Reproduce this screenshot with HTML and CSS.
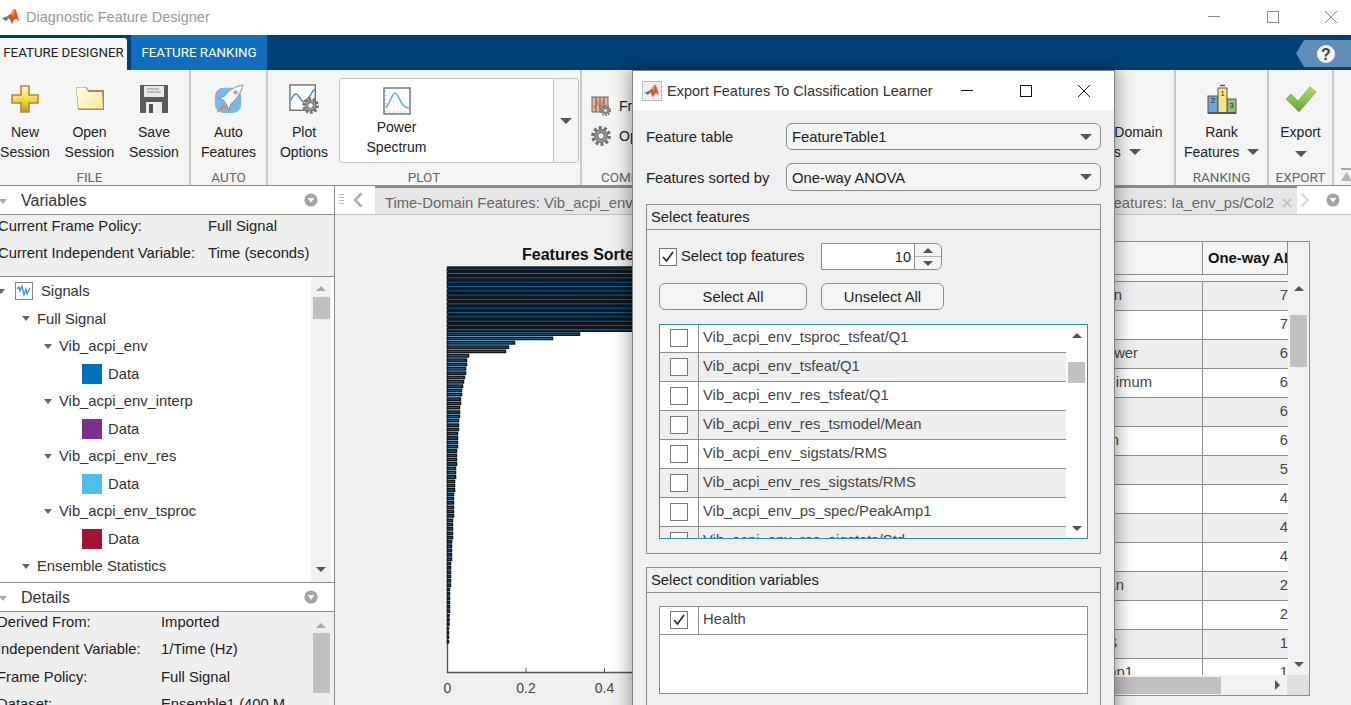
FILE: index.html
```html
<!DOCTYPE html>
<html lang="en">
<head>
<meta charset="utf-8">
<title>Diagnostic Feature Designer</title>
<link rel="stylesheet" href="styles.css">
</head>
<body>
<svg class="defs" width="0" height="0" aria-hidden="true">
  <defs>
    <linearGradient id="gold" x1="0" y1="0" x2="0" y2="1"><stop offset="0" stop-color="#fff7b8"/><stop offset=".55" stop-color="#f8d640"/><stop offset="1" stop-color="#c9981c"/></linearGradient>
    <linearGradient id="paper" x1="0" y1="0" x2="1" y2="1"><stop offset="0" stop-color="#fffdf0"/><stop offset="1" stop-color="#fbe89a"/></linearGradient>
    <linearGradient id="green" x1="0" y1="0" x2="0" y2="1"><stop offset="0" stop-color="#b4df6a"/><stop offset="1" stop-color="#5da52a"/></linearGradient>
    <symbol id="gear" viewBox="0 0 20 20">
      <circle cx="10" cy="10" r="8.2" fill="none" stroke="#6f6f6f" stroke-width="3.4" stroke-dasharray="3 2.15"/>
      <circle cx="10" cy="10" r="6.4" fill="#9a9a9a" stroke="#666"/>
      <circle cx="10" cy="10" r="3.4" fill="#f2f2f2" stroke="#555"/>
    </symbol>
    <symbol id="logo" viewBox="0 0 20 20">
      <path d="M0 11.5l5.5-2.3 2 2.2-3 3.2z" fill="#3a7fb8"/>
      <path d="M5.5 9.2L10 6c1-2 3-5 4-5 2 0 3.500 8 5.500 14-2-1.500-3.500-3-4.500-3-1.500 0-3 5-4 6-1-3-2.500-5.500-3.500-6.600z" fill="#d9582a"/>
      <path d="M14 1c-1 0-3 3-4 5l2.500 3.500z" fill="#e9a13b"/>
    </symbol>
    <symbol id="menu-dot" viewBox="0 0 14 14">
      <circle cx="7" cy="7" r="6.600" fill="#a4a4a4"/>
      <path d="M3.600 5h6.800L7 9.800z" fill="#fff"/>
    </symbol>
  </defs>
</svg>

<header class="titlebar">
  <svg class="app-logo"><use href="#logo"/></svg>
  <span class="app-title">Diagnostic Feature Designer</span>
  <div class="win-controls">
    <svg class="win-icon" viewBox="0 0 12 12"><path d="M0 5.500h12" stroke="#8a8a8a" fill="none"/></svg>
    <svg class="win-icon" viewBox="0 0 12 12"><rect x=".5" y=".5" width="11" height="11" fill="none" stroke="#8a8a8a"/></svg>
    <svg class="win-icon" viewBox="0 0 12 12"><path d="M0 0l12 12M12 0L0 12" stroke="#8a8a8a" fill="none"/></svg>
  </div>
</header>

<nav class="tabstrip">
  <div class="tab tab-active">FEATURE DESIGNER</div>
  <div class="tab tab-other">FEATURE RANKING</div>
  <svg class="help" viewBox="0 0 55 27">
    <path d="M8 0h47v27H8L0 13.500z" fill="#5f8db6"/>
    <circle cx="30" cy="14" r="9" fill="#f4f4f4"/>
    <text x="30" y="19.500" text-anchor="middle" class="help-q">?</text>
  </svg>
</nav>

<section class="toolstrip">
  <div class="sec sec-file">
    <div class="sec-body file-body">
      <div class="tool">
        <svg class="ico" viewBox="0 0 30 30"><path d="M11 2h8v9h9v8h-9v9h-8v-9H2v-8h9z" fill="url(#gold)" stroke="#a98a45" stroke-width="1.600"/></svg>
        <span>New<br>Session</span>
      </div>
      <div class="tool">
        <svg class="ico" viewBox="0 0 30 30"><path d="M1 3h10l3 3h15v20H3z" fill="#a98a55"/><path d="M1.500 3.500h9l3 4.500h13.500l1 16.500H3.500z" fill="url(#paper)"/></svg>
        <span>Open<br>Session</span>
      </div>
      <div class="tool">
        <svg class="ico" viewBox="0 0 30 30"><path d="M1 1h28v28H1z" fill="#5a5a5a"/><rect x="5" y="2" width="20" height="11" fill="#e8e8e8"/><path d="M8 5h12M8 8h14" stroke="#8a8a8a"/><rect x="7" y="18" width="16" height="11" fill="#efefef"/><rect x="10" y="20" width="4" height="9" fill="#555"/></svg>
        <span>Save<br>Session</span>
      </div>
    </div>
    <div class="sec-label label-file">FILE</div>
  </div>
  <div class="sec sec-auto">
    <div class="sec-body">
      <div class="tool tool-wide">
        <svg class="ico" viewBox="0 0 32 32">
          <rect x="1" y="4" width="28" height="27" rx="9" fill="#73b9f2"/>
          <path d="M31 1C24 2 16 6 11 13L5 15l5 2 4 6 2 5 2-7c7-5 11-13 13-20z" fill="#f6f6f6" stroke="#8d8d8d"/>
          <circle cx="23" cy="9" r="2.300" fill="#a8a8a8"/>
          <path d="M10 21l-8 10 11-6z" fill="#f08a1d"/>
        </svg>
        <span>Auto<br>Features</span>
      </div>
    </div>
    <div class="sec-label">AUTO</div>
  </div>
  <div class="sec sec-plot">
    <div class="sec-body plot-body">
      <div class="tool tool-options">
        <svg class="ico" viewBox="0 0 32 32">
          <rect x="1" y="1" width="27" height="27" fill="#fff" stroke="#666" stroke-width="1.400"/>
          <path d="M2 17c4-8 6-8 9-3s5 7 9 2 6-11 8-10" fill="none" stroke="#3f86c6" stroke-width="1.500"/>
          <use href="#gear" x="14" y="14" width="18" height="18"/>
        </svg>
        <span>Plot<br>Options</span>
      </div>
      <div class="gallery">
        <div class="gallery-item">
          <svg class="ico ico-spec" viewBox="0 0 28 28">
            <rect x="1" y="1" width="26" height="26" fill="#fff" stroke="#777" stroke-width="1.500"/>
            <path d="M3 4v21h22" fill="none" stroke="#999" stroke-dasharray="1 3"/>
            <path d="M3 20c4-3 6-14 9-14s5 9 8 12 4 3 6 3" fill="none" stroke="#57b0e3" stroke-width="1.500"/>
          </svg>
          <span>Power<br>Spectrum</span>
        </div>
        <div class="gallery-drop"><i class="caret"></i></div>
      </div>
    </div>
    <div class="sec-label">PLOT</div>
  </div>
  <div class="sec sec-compute">
    <div class="sec-body compute-body">
      <div class="small-tool">
        <svg class="ico-small" viewBox="0 0 20 20">
          <rect x="1" y="1" width="16" height="15" fill="#e8b49c" stroke="#666"/>
          <path d="M5 1v15M9 1v15M13 1v15" stroke="#777" stroke-width="1.500"/>
          <path d="M3 12l3-7 3 8 4-10" fill="none" stroke="#e0662d"/>
          <use href="#gear" x="9" y="9" width="11" height="11"/>
        </svg>
        <span>Frame Policy</span>
      </div>
      <div class="small-tool">
        <svg class="ico-small" viewBox="0 0 20 20"><use href="#gear" x="0" y="0" width="20" height="20"/></svg>
        <span>Options</span>
      </div>
    </div>
    <div class="sec-label label-compute">COMPUTE</div>
  </div>
  <div class="sec sec-features">
    <div class="sec-body features-body">
      <div class="tool tool-domain">
        <span>Frequency-Domain<br>Features <i class="caret caret-inline"></i></span>
      </div>
    </div>
    <div class="sec-label label-features">FEATURE DESIGN</div>
  </div>
  <div class="sec sec-rank">
    <div class="sec-body">
      <div class="tool tool-wide">
        <svg class="ico" viewBox="0 0 30 30">
          <rect x="1" y="12" width="10" height="17" fill="#6ea6d8" stroke="#555"/>
          <rect x="20" y="15" width="9" height="14" fill="#8fc07c" stroke="#555"/>
          <rect x="11" y="4" width="9" height="25" fill="#f9e680" stroke="#555"/>
          <path d="M1 29h28" stroke="#555" stroke-width="2"/>
          <path d="M13 1.500h5" stroke="#555" stroke-width="1.500"/>
          <text x="15.500" y="12" class="rank-num" text-anchor="middle">1</text>
          <text x="6" y="19" class="rank-num" text-anchor="middle">2</text>
          <text x="24.500" y="24" class="rank-num" text-anchor="middle">3</text>
        </svg>
        <span>Rank<br>Features <i class="caret caret-inline"></i></span>
      </div>
    </div>
    <div class="sec-label">RANKING</div>
  </div>
  <div class="sec sec-export">
    <div class="sec-body">
      <div class="tool tool-wide">
        <svg class="ico" viewBox="0 0 30 30"><path d="M0 15l5-5 7 7L24 3l6 5-17 20z" fill="url(#green)" stroke="#7fa85a" stroke-width=".8"/></svg>
        <span>Export<br><i class="caret"></i></span>
      </div>
    </div>
    <div class="sec-label">EXPORT</div>
  </div>
  <div class="sec sec-collapse">
    <svg class="collapse" viewBox="0 0 11 14"><path d="M0 1h11" stroke="#aaa" stroke-width="2"/><path d="M5.500 4L11 13H0z" fill="#b5b5b5"/></svg>
  </div>
</section>

<main class="workspace">
  <aside class="side">
    <div class="side-head">
      <i class="tree-arrow head-arrow"></i><span>Variables</span>
      <svg class="menu-dot"><use href="#menu-dot"/></svg>
    </div>
    <div class="info">
      <div class="info-row"><span class="info-key-a">Current Frame Policy:</span><span>Full Signal</span></div>
      <div class="info-row"><span class="info-key-a">Current Independent Variable:</span><span>Time (seconds)</span></div>
    </div>
    <div class="tree">
      <div class="tree-rows">
        <div class="node lvl0"><i class="tree-arrow"></i>
          <svg class="signal-ico" viewBox="0 0 18 18"><rect x=".5" y=".5" width="17" height="17" fill="#fff" stroke="#888"/><path d="M2 7l2-2 1 4 2-5 2 9 2-6 1 5 3-6" fill="none" stroke="#2a8fd6" stroke-width="1.200"/></svg>
          <span>Signals</span></div>
        <div class="node lvl1"><i class="tree-arrow"></i><span>Full Signal</span></div>
        <div class="node lvl2"><i class="tree-arrow"></i><span>Vib_acpi_env</span></div>
        <div class="node lvl3"><i class="swatch sw-blue"></i><span>Data</span></div>
        <div class="node lvl2"><i class="tree-arrow"></i><span>Vib_acpi_env_interp</span></div>
        <div class="node lvl3"><i class="swatch sw-purple"></i><span>Data</span></div>
        <div class="node lvl2"><i class="tree-arrow"></i><span>Vib_acpi_env_res</span></div>
        <div class="node lvl3"><i class="swatch sw-sky"></i><span>Data</span></div>
        <div class="node lvl2"><i class="tree-arrow"></i><span>Vib_acpi_env_tsproc</span></div>
        <div class="node lvl3"><i class="swatch sw-red"></i><span>Data</span></div>
        <div class="node lvl1"><i class="tree-arrow"></i><span>Ensemble Statistics</span></div>
      </div>
      <div class="vbar tree-bar">
        <i class="arrow-up arrow-light"></i>
        <b class="thumb thumb-tree"></b>
        <i class="arrow-down"></i>
      </div>
    </div>
    <div class="side-head">
      <i class="tree-arrow head-arrow"></i><span>Details</span>
      <svg class="menu-dot"><use href="#menu-dot"/></svg>
    </div>
    <div class="details">
      <div class="details-rows">
        <div class="info-row"><span class="info-key-b">Derived From:</span><span>Imported</span></div>
        <div class="info-row"><span class="info-key-b">Independent Variable:</span><span>1/Time (Hz)</span></div>
        <div class="info-row"><span class="info-key-b">Frame Policy:</span><span>Full Signal</span></div>
        <div class="info-row"><span class="info-key-b">Dataset:</span><span>Ensemble1 (400 M</span></div>
      </div>
      <div class="vbar details-bar">
        <i class="arrow-up arrow-light"></i>
        <b class="thumb thumb-details"></b>
      </div>
    </div>
  </aside>

  <div class="doc">
    <div class="doc-tabs">
      <div class="doc-nav doc-nav-left">
        <i class="grip"></i>
        <svg class="chev" viewBox="0 0 10 16"><path d="M8.500 1.500L2 8l6.500 6.500" fill="none" stroke="#aaa" stroke-width="2.500"/></svg>
      </div>
      <div class="doc-tab-row">
        <span>Time-Domain Features: Vib_acpi_env</span>
        <span class="doc-tab-end">Features: Ia_env_ps/Col2 <svg class="tab-x" viewBox="0 0 10 10"><path d="M1 1l8 8M9 1L1 9" stroke="#c4c4c4" stroke-width="2"/></svg></span>
      </div>
      <div class="doc-nav doc-nav-right">
        <svg class="chev" viewBox="0 0 10 16"><path d="M1.500 1.500L8 8l-6.500 6.500" fill="none" stroke="#ddd" stroke-width="2.500"/></svg>
        <svg class="menu-dot doc-dot"><use href="#menu-dot"/></svg>
      </div>
    </div>
    <div class="doc-body">
      <figure class="plot">
        <figcaption class="plot-title">Features Sorted by One-way ANOVA</figcaption>
        <svg class="axes" viewBox="0 0 363 440">
          <rect x="10" y=".5" width="353" height="406" fill="#fff"/>
          <rect class="bars-back" x="10.500" y="1" width="353" height="65"/>
          <path d="M10.500 .5V406.500H363M10.500 .5H363" fill="none" stroke="#555" stroke-width="1.400"/>
          <path d="M89 .5v4M167.500 .5v4M89 406v-4M167.500 406v-4M246 406v-4" stroke="#555"/>
          <path class="bars" transform="translate(10.500 2)" d="M0 0h360v2.300h-360z m0 4.330h360v2.300h-360z m0 4.330h360v2.300h-360z m0 4.330h360v2.300h-360z m0 4.330h360v2.300h-360z m0 4.330h360v2.300h-360z m0 4.330h360v2.300h-360z m0 4.330h360v2.300h-360z m0 4.330h360v2.300h-360z m0 4.330h360v2.300h-360z m0 4.330h360v2.300h-360z m0 4.330h360v2.300h-360z m0 4.330h360v2.300h-360z m0 4.330h360v2.300h-360z m0 4.330h360v2.300h-360z m0 4.330h132v2.300h-132z m0 4.330h105v2.300h-105z m0 4.330h67v2.300h-67z m0 4.330h61v2.300h-61z m0 4.330h58v2.300h-58z m0 4.330h21v2.300h-21z m0 4.330h19v2.300h-19z m0 4.330h19v2.300h-19z m0 4.330h18v2.300h-18z m0 4.330h18v2.300h-18z m0 4.330h17v2.300h-17z m0 4.330h16v2.300h-16z m0 4.330h15v2.300h-15z m0 4.330h14v2.300h-14z m0 4.330h14v2.300h-14z m0 4.330h13v2.300h-13z m0 4.330h13v2.300h-13z m0 4.330h12v2.300h-12z m0 4.330h12v2.300h-12z m0 4.330h12v2.300h-12z m0 4.330h11v2.300h-11z m0 4.330h11v2.300h-11z m0 4.330h11v2.300h-11z m0 4.330h10v2.300h-10z m0 4.330h10v2.300h-10z m0 4.330h10v2.300h-10z m0 4.330h10v2.300h-10z m0 4.330h9v2.300h-9z m0 4.330h9v2.300h-9z m0 4.330h9v2.300h-9z m0 4.330h9v2.300h-9z m0 4.330h8v2.300h-8z m0 4.330h8v2.300h-8z m0 4.330h8v2.300h-8z m0 4.330h7v2.300h-7z m0 4.330h7v2.300h-7z m0 4.330h7v2.300h-7z m0 4.330h6v2.300h-6z m0 4.330h6v2.300h-6z m0 4.330h6v2.300h-6z m0 4.330h6v2.300h-6z m0 4.330h6v2.300h-6z m0 4.330h6v2.300h-6z m0 4.330h5v2.300h-5z m0 4.330h5v2.300h-5z m0 4.330h5v2.300h-5z m0 4.330h5v2.300h-5z m0 4.330h5v2.300h-5z m0 4.330h4v2.300h-4z m0 4.330h4v2.300h-4z m0 4.330h4v2.300h-4z m0 4.330h4v2.300h-4z m0 4.330h4v2.300h-4z m0 4.330h3v2.300h-3z m0 4.330h3v2.300h-3z m0 4.330h3v2.300h-3z m0 4.330h3v2.300h-3z m0 4.330h3v2.300h-3z m0 4.330h3v2.300h-3z m0 4.330h2v2.300h-2z m0 4.330h2v2.300h-2z m0 4.330h2v2.300h-2z m0 4.330h2v2.300h-2z m0 4.330h2v2.300h-2z m0 4.330h2v2.300h-2z m0 4.330h1.500v2.300h-1.500z m0 4.330h1.500v2.300h-1.500z m0 4.330h1.500v2.300h-1.500z m0 4.330h1v2.300h-1z m0 4.330h1v2.300h-1z m0 4.330h1v2.300h-1z m0 4.330h1v2.300h-1z"/>
          <text x="10.500" y="427" class="tick" text-anchor="middle">0</text>
          <text x="89" y="427" class="tick" text-anchor="middle">0.2</text>
          <text x="167.500" y="427" class="tick" text-anchor="middle">0.4</text>
        </svg>
      </figure>
      <div class="ranktable">
        <div class="rt-main">
          <div class="rt-cols">
            <div class="rt-head">
              <div class="rt-c1"></div>
              <div class="rt-c2 rt-head-cell">One-way ANOVA</div>
            </div>
            <div class="rt-rule"></div>
            <div class="rt-rows">
              <div class="rt-row"><div class="rt-c1 end-a">n</div><div class="rt-c2">7</div></div>
              <div class="rt-row"><div class="rt-c1"></div><div class="rt-c2">7</div></div>
              <div class="rt-row"><div class="rt-c1 end-b">wer</div><div class="rt-c2">6</div></div>
              <div class="rt-row"><div class="rt-c1 end-c">imum</div><div class="rt-c2">6</div></div>
              <div class="rt-row"><div class="rt-c1"></div><div class="rt-c2">6</div></div>
              <div class="rt-row"><div class="rt-c1 end-d">n</div><div class="rt-c2">6</div></div>
              <div class="rt-row"><div class="rt-c1"></div><div class="rt-c2">5</div></div>
              <div class="rt-row"><div class="rt-c1"></div><div class="rt-c2">4</div></div>
              <div class="rt-row"><div class="rt-c1"></div><div class="rt-c2">4</div></div>
              <div class="rt-row"><div class="rt-c1"></div><div class="rt-c2">4</div></div>
              <div class="rt-row"><div class="rt-c1 end-e">an</div><div class="rt-c2">2</div></div>
              <div class="rt-row"><div class="rt-c1"></div><div class="rt-c2">2</div></div>
              <div class="rt-row"><div class="rt-c1 end-f">S</div><div class="rt-c2">1</div></div>
              <div class="rt-row"><div class="rt-c1 end-g">mp1</div><div class="rt-c2">1</div></div>
            </div>
          </div>
          <div class="vbar rt-bar">
            <i class="arrow-up"></i>
            <b class="thumb thumb-rt"></b>
            <i class="arrow-down"></i>
          </div>
        </div>
        <div class="rt-hbar">
          <b class="hthumb"></b>
          <i class="arrow-right"></i>
          <b class="rt-corner"></b>
        </div>
      </div>
    </div>
  </div>
</main>

<div class="dialog" role="dialog" aria-label="Export Features To Classification Learner">
  <div class="dlg-title">
    <svg class="dlg-logo" viewBox="0 0 20 20"><rect x=".5" y=".5" width="19" height="19" fill="#eee" stroke="#bbb"/><use href="#logo" x="2" y="3" width="16" height="15"/></svg>
    <span>Export Features To Classification Learner</span>
    <div class="dlg-controls">
      <svg class="win-icon" viewBox="0 0 12 12"><path d="M0 5.500h12" stroke="#111" fill="none"/></svg>
      <svg class="win-icon" viewBox="0 0 12 12"><rect x=".5" y=".5" width="11" height="11" fill="none" stroke="#111"/></svg>
      <svg class="win-icon" viewBox="0 0 12 12"><path d="M0 0l12 12M12 0L0 12" stroke="#111" fill="none"/></svg>
    </div>
  </div>
  <div class="dlg-body">
    <div class="field"><label>Feature table</label><div class="select select-a"><span>FeatureTable1</span><i class="caret"></i></div></div>
    <div class="field field-b"><label>Features sorted by</label><div class="select select-b"><span>One-way ANOVA</span><i class="caret"></i></div></div>

    <section class="panel">
      <h2 class="panel-head">Select features</h2>
      <div class="panel-body">
        <div class="top-row">
          <div class="check-label">
            <span class="box box-on"><svg viewBox="0 0 16 16"><path d="M3 8l3.500 4L13 3" fill="none" stroke="#222" stroke-width="1.600"/></svg></span>
            <span class="check-text">Select top features</span>
          </div>
          <div class="spinner">
            <span class="spin-val">10</span>
            <span class="spin-btns"><i class="arrow-up"></i><i class="spin-line"></i><i class="arrow-down"></i></span>
          </div>
        </div>
        <div class="btn-row">
          <button class="btn btn-a" type="button">Select All</button>
          <button class="btn btn-b" type="button">Unselect All</button>
        </div>
        <div class="list list-features">
          <div class="list-rows">
            <div class="list-row"><div class="list-check"><span class="box"></span></div><div class="list-text">Vib_acpi_env_tsproc_tsfeat/Q1</div></div>
            <div class="list-row"><div class="list-check"><span class="box"></span></div><div class="list-text">Vib_acpi_env_tsfeat/Q1</div></div>
            <div class="list-row"><div class="list-check"><span class="box"></span></div><div class="list-text">Vib_acpi_env_res_tsfeat/Q1</div></div>
            <div class="list-row"><div class="list-check"><span class="box"></span></div><div class="list-text">Vib_acpi_env_res_tsmodel/Mean</div></div>
            <div class="list-row"><div class="list-check"><span class="box"></span></div><div class="list-text">Vib_acpi_env_sigstats/RMS</div></div>
            <div class="list-row"><div class="list-check"><span class="box"></span></div><div class="list-text">Vib_acpi_env_res_sigstats/RMS</div></div>
            <div class="list-row"><div class="list-check"><span class="box"></span></div><div class="list-text">Vib_acpi_env_ps_spec/PeakAmp1</div></div>
            <div class="list-row"><div class="list-check"><span class="box"></span></div><div class="list-text">Vib_acpi_env_res_sigstats/Std</div></div>
          </div>
          <div class="vbar list-bar">
            <i class="arrow-up"></i>
            <b class="thumb thumb-list"></b>
            <i class="arrow-down"></i>
          </div>
        </div>
      </div>
    </section>

    <section class="panel panel-cond">
      <h2 class="panel-head">Select condition variables</h2>
      <div class="panel-body">
        <div class="list list-cond">
          <div class="list-rows">
            <div class="list-row list-row-plain"><div class="list-check"><span class="box"><svg viewBox="0 0 16 16"><path d="M3 8l3.500 4L13 3" fill="none" stroke="#222" stroke-width="1.600"/></svg></span></div><div class="list-text">Health</div></div>
          </div>
        </div>
      </div>
    </section>
  </div>
</div>
</body>
</html>
```

FILE: styles.css
```css
* { box-sizing: border-box; }
html, body { margin: 0; padding: 0; }
body {
  position: relative;
  width: 1351px;
  height: 705px;
  overflow: hidden;
  display: flex;
  flex-direction: column;
  font: 14.8px/20px "Liberation Sans", Arial, sans-serif;
  color: #222;
  background: #f0f0f0;
}
i, b { display: block; font-style: normal; }
.defs { position: absolute; }

/* window title */
.titlebar { height: 35px; flex: none; background: #fff; display: flex; align-items: center; padding: 0 0 2px 2px; }
.app-logo { width: 18px; height: 18px; margin-right: 6px; }
.app-title { color: #999; font-size: 14.5px; }
.win-controls { margin-left: auto; display: flex; gap: 46.5px; padding-right: 14px; }
.win-icon { width: 12px; height: 12px; display: block; }

/* tabs */
.tabstrip { height: 35px; flex: none; background: #004075; display: flex; align-items: flex-end; position: relative; }
.tab { height: 35px; font: 13.3px/36px Roboto, "Liberation Sans", sans-serif; text-align: center; }
.tab-active { width: 127px; height: 32px; line-height: 30px; background: #f5f5f5; border-top-right-radius: 3px; white-space: nowrap; color: #222; }
.tab-other { width: 136px; margin-left: 4px; background: #0f6fbe; color: #fff; }
.help { width: 55px; height: 27px; margin-left: auto; align-self: center; margin-right: 0; margin-top: 1px; }
.help-q { font: bold 16px "Liberation Sans", sans-serif; fill: #444; }

/* toolstrip */
.toolstrip { height: 115px; flex: none; background: #f5f5f5; display: flex; font-size: 14px; }
.sec { display: flex; flex-direction: column; flex: none; position: relative; border-right: 2px solid #c9c9c9; }
.sec-body { flex: 1; display: flex; justify-content: center; min-height: 0; }
.sec-label { height: 20px; color: #666; font: 13.5px/25px Roboto, "Liberation Sans", sans-serif; text-align: center; }
.sec-file { width: 191px; }
.file-body { justify-content: flex-start; gap: 14.5px; }
.label-file { padding-right: 10px; }
.sec-auto { width: 77px; }
.sec-plot { width: 314px; }
.plot-body { justify-content: flex-start; }
.sec-compute { width: 230px; }
.sec-features { width: 364px; }
.sec-rank { width: 93px; }
.sec-export { width: 65px; }
.sec-collapse { flex: 1; border-right: 0; }

.tool { width: 50px; display: flex; flex-direction: column; align-items: center; text-align: center; white-space: nowrap; color: #222; }
.tool > span { display: block; }
.tool-wide { width: 80px; }
.tool-options { width: 70px; margin-left: 1px; }
.ico { width: 30px; height: 30px; margin: 14px 0 8px; display: block; flex: none; }
.caret { width: 0; height: 0; display: inline-block; border: 6px solid transparent; border-top: 6px solid #555; border-bottom: 0; }
.caret-inline { margin-left: 4px; vertical-align: 2px; }

.gallery { width: 240px; height: 85px; margin-top: 8px; background: #fff; border: 1px solid #c2c2c2; border-radius: 3px; display: flex; }
.gallery-item { width: 113px; display: flex; flex-direction: column; align-items: center; text-align: center; }
.ico-spec { width: 28px; height: 28px; margin: 8px 0 2px; }
.gallery-drop { margin-left: auto; width: 25px; background: #f5f5f5; border-left: 1px solid #c2c2c2; display: flex; align-items: center; justify-content: center; border-radius: 0 3px 3px 0; }

.compute-body { flex-direction: column; justify-content: flex-start; padding: 26px 0 0 9px; gap: 10px; }
.small-tool { display: flex; align-items: center; gap: 8px; height: 20px; white-space: nowrap; }
.ico-small { width: 20px; height: 20px; display: block; flex: none; }
.label-compute { text-align: left; padding-left: 19px; }
.features-body { justify-content: flex-end; padding-right: 11px; }
.tool-domain { width: 120px; padding-top: 52px; }
.label-features { text-align: right; padding-right: 60px; }
.collapse { width: 11px; height: 14px; position: absolute; left: 7px; top: 98px; }
.rank-num { font: 7.500px "Liberation Sans", sans-serif; fill: #222; }

/* workspace */
.workspace { flex: 1; min-height: 0; display: flex; border-top: 1px solid #8c8c8c; }
.side { width: 335px; flex: none; display: flex; flex-direction: column; border-right: 1px solid #8c8c8c; min-height: 0; }
.side-head { height: 29px; flex: none; background: #fff; border-bottom: 1px solid #8c8c8c; display: flex; align-items: center; font-size: 16px; color: #333; padding-top: 2px; }
.head-arrow { margin: 0 14px 0 -1px; border-top-color: #aaa !important; }
.menu-dot { width: 14px; height: 14px; margin-left: auto; margin-right: 16px; margin-top: -3px; }

.tree-arrow { width: 0; height: 0; border: 4.500px solid transparent; border-top: 5px solid #666; border-bottom: 0; flex: none; }
.info { height: 62px; flex: none; background: #efefef; border-bottom: 1px solid #8c8c8c; color: #222; }
.info-row { display: flex; height: 27px; line-height: 23px; white-space: nowrap; margin-left: -2px; }
.info-key-a { width: 210px; }
.info-key-b { width: 164px; }

.tree { height: 306px; flex: none; background: #fff; display: flex; border-bottom: 1px solid #8c8c8c; color: #333; }
.tree-rows { flex: 1; overflow: hidden; padding-top: .4px; }
.node { height: 27.500px; display: flex; align-items: center; white-space: nowrap; }
.lvl0 .tree-arrow { margin-left: -3px; }
.signal-ico { width: 18px; height: 18px; margin: 0 8px 0 10px; flex: none; }
.lvl1 { padding-left: 22px; }
.lvl1 .tree-arrow { margin-right: 7px; }
.lvl2 { padding-left: 44px; }
.lvl2 .tree-arrow { margin-right: 7px; }
.lvl3 { padding-left: 82px; }
.swatch { width: 20px; height: 20px; margin-right: 6px; }
.sw-blue { background: #0072bd; }
.sw-purple { background: #7e2f8e; }
.sw-sky { background: #4dbeee; }
.sw-red { background: #a2142f; }

.vbar { flex: none; display: flex; flex-direction: column; align-items: center; background: #f2f2f2; }
.thumb { width: 17px; background: #c1c1c1; flex: none; }
.arrow-up, .arrow-down { width: 0; height: 0; border: 5px solid transparent; flex: none; }
.arrow-up { border-bottom: 5px solid #555; border-top: 0; }
.arrow-down { border-top: 5px solid #555; border-bottom: 0; margin-top: auto; }
.arrow-light { border-bottom-color: #aaa; }
.arrow-right { width: 0; height: 0; border: 5px solid transparent; border-left: 5px solid #555; border-right: 0; flex: none; }

.tree-bar { width: 20px; margin-right: 3px; padding: 9px 0 10px; }
.thumb-tree { height: 22px; margin-top: 6px; }

.details { flex: 1; min-height: 0; background: #efefef; display: flex; overflow: hidden; }
.details-rows { flex: 1; }
.details-rows .info-row { margin-left: -3px; line-height: 21px; height: 27.300px; }
.details-bar { width: 20px; margin-right: 3px; background: #efefef; padding-top: 11px; }
.thumb-details { height: 60px; margin-top: 5px; }

/* document */
.doc { flex: 1; min-width: 0; display: flex; flex-direction: column; }
.doc-tabs { height: 29px; flex: none; display: flex; border-bottom: 1px solid #c0c0c0; }
.doc-nav { background: #fff; display: flex; align-items: center; flex: none; }
.doc-nav-left { width: 40px; padding-left: 4px; }
.grip { width: 5px; height: 12px; background: repeating-linear-gradient(#bbb 0 1px, #fff 1px 3px); }
.chev { width: 10px; height: 16px; display: block; flex: none; }
.doc-nav-left .chev { margin-left: 9px; }
.doc-nav-right { width: 54px; padding-left: 3px; }
.doc-dot { margin: 0 0 0 16px; }
.doc-tab-row { flex: 1; min-width: 0; background: #e6e6e6; border-top: 2px solid #8c8c8c; display: flex; justify-content: space-between; align-items: center; padding: 3px 5px 0 10px; color: #666; white-space: nowrap; }
.doc-tab-end { display: flex; align-items: center; gap: 8px; }
.tab-x { width: 10px; height: 10px; }

.doc-body { flex: 1; min-height: 0; display: flex; background: #f0f0f0; overflow: hidden; }
.plot { margin: 0 0 0 102px; width: 363px; flex: none; }
.plot-title { padding: 30px 0 0 85px; height: 51px; line-height: 19px; font-weight: 700; font-size: 16px; color: #111; white-space: nowrap; overflow: hidden; }
.axes { width: 363px; height: 440px; display: block; }
.bars-back { fill: #10161c; }
.bars { fill: #0078c6; stroke: #10161c; stroke-width: 1.500; }
.tick { font: 14px "Liberation Sans", sans-serif; fill: #444; }

.ranktable { width: 510px; height: 455px; margin-top: 26px; flex: none; border: 1px solid #8c8c8c; display: flex; flex-direction: column; background: #fff; }
.rt-main { flex: 1; min-height: 0; display: flex; }
.rt-cols { flex: 1; min-width: 0; display: flex; flex-direction: column; }
.rt-head { height: 33px; flex: none; display: flex; background: #f5f5f5; border-bottom: 1px solid #8c8c8c; }
.rt-rule { height: 7px; flex: none; border-bottom: 1px solid #8c8c8c; background: #f5f5f5; }
.rt-rows { flex: 1; min-height: 0; overflow: hidden; }
.rt-row { height: 29px; display: flex; border-bottom: 1px solid #8c8c8c; line-height: 27px; color: #444; background: #fff; }
.rt-row:nth-child(odd) { background: #efefef; }
.rt-c1 { width: 402px; flex: none; border-right: 1px solid #8c8c8c; text-align: right; white-space: nowrap; }
.rt-c2 { flex: 1; min-width: 0; text-align: right; overflow: hidden; white-space: nowrap; }
.rt-head-cell { text-align: left; padding-left: 5px; font-weight: 700; color: #111; line-height: 33px; border-right: 1px solid #8c8c8c; }
.end-a { padding-right: 80px; }
.end-b { padding-right: 64px; }
.end-c { padding-right: 50px; }
.end-d { padding-right: 83px; }
.end-e { padding-right: 78px; }
.end-f { padding-right: 85px; }
.end-g { padding-right: 69px; }
.rt-bar { width: 21px; background: #f2f2f2; padding: 44px 0 8px; }
.thumb-rt { height: 52px; margin-top: 24px; }
.rt-hbar { height: 20px; flex: none; background: #f2f2f2; display: flex; align-items: center; }
.hthumb { width: 420px; height: 17px; background: #c1c1c1; }
.arrow-right { margin-left: 54px; }
.rt-corner { width: 22px; height: 20px; margin-left: auto; background: #e0e0e0; }

/* dialog */
.dialog {
  position: absolute;
  left: 632px;
  top: 70px;
  width: 483px;
  height: 650px;
  background: #f0f0f0;
  border: 1px solid #808080;
  box-shadow: 0 0 16px 3px rgba(0, 0, 0, .35);
  display: flex;
  flex-direction: column;
  color: #222;
}
.dlg-title { height: 39px; flex: none; background: #fff; display: flex; align-items: center; padding: 1px 0 0 9px; color: #333; font-size: 14.500px; white-space: nowrap; }
.dlg-logo { width: 20px; height: 20px; margin-right: 5px; flex: none; }
.dlg-controls { margin-left: auto; display: flex; gap: 46.500px; padding-right: 24px; }
.dlg-body { padding: 13px 13px 0; display: flex; flex-direction: column; gap: 13px; }
.field { display: flex; align-items: center; white-space: nowrap; }
.field label { width: 140px; flex: none; }
.field-b label, .field-b .select span { padding-top: 1px; }
.select { width: 315px; border: 1px solid #8c8c8c; border-radius: 6px; background: #f5f5f5; display: flex; align-items: center; justify-content: space-between; padding: 0 8px 0 5px; }
.select-a { height: 27px; }
.select-b { height: 28px; }
.panel { width: 455px; height: 350px; flex: none; border: 1px solid #8c8c8c; }
.panel-head { height: 25px; margin: 0; border-bottom: 1px solid #8c8c8c; font: 14.800px/24px "Liberation Sans", sans-serif; padding-left: 4px; }
.panel-body { padding: 13px 12px 0; display: flex; flex-direction: column; gap: 13px; }
.top-row { display: flex; height: 27px; align-items: center; }
.check-label { width: 162px; display: flex; align-items: center; gap: 4px; white-space: nowrap; }
.check-text { margin-top: -2px; }
.box { width: 18px; height: 18px; border: 1px solid #777; background: #fff; display: block; flex: none; }
.box svg { width: 16px; height: 16px; display: block; }
.spinner { width: 121px; height: 27px; border: 1px solid #8c8c8c; border-radius: 0 6px 6px 0; background: #fff; display: flex; }
.spin-val { flex: 1; text-align: right; line-height: 27px; font-size: 14.500px; padding-right: 3px; }
.spin-btns { width: 27px; border-left: 1px solid #8c8c8c; background: #f5f5f5; display: flex; flex-direction: column; align-items: center; justify-content: space-evenly; border-radius: 0 6px 6px 0; }
.spin-btns .arrow-down { margin-top: 0; }
.spin-line { width: 100%; height: 1px; background: #b5b5b5; }
.btn-row { display: flex; gap: 14px; }
.btn { height: 27px; border: 1px solid #8c8c8c; border-radius: 6px; background: #f5f5f5; font: inherit; color: inherit; padding: 0; }
.btn-a { width: 148px; }
.btn-b { width: 123px; }
.list { width: 429px; background: #fff; display: flex; margin-top: 1px; overflow: hidden; }
.list-features { height: 215px; border: 1px solid #2a8ad4; }
.list-rows { flex: 1; min-width: 0; margin-top: -1px; }
.list-row { height: 29px; display: flex; border-bottom: 1px solid #8c8c8c; background: #fff; color: #444; }
.list-row:nth-child(even) { background: #efefef; }
.list-check { width: 39px; flex: none; border-right: 1px solid #8c8c8c; padding: 5px 0 0 10px; }
.list-text { padding-left: 4px; line-height: 26px; white-space: nowrap; }
.list-bar { width: 21px; background: #fff; padding: 8px 0 7px; }
.thumb-list { height: 21px; margin-top: 24px; }
.panel-cond .panel-body { padding-top: 13px; }
.list-cond { height: 88px; border: 1px solid #8c8c8c; margin-top: 0; }
.list-row-plain { background: #fff; }
```
